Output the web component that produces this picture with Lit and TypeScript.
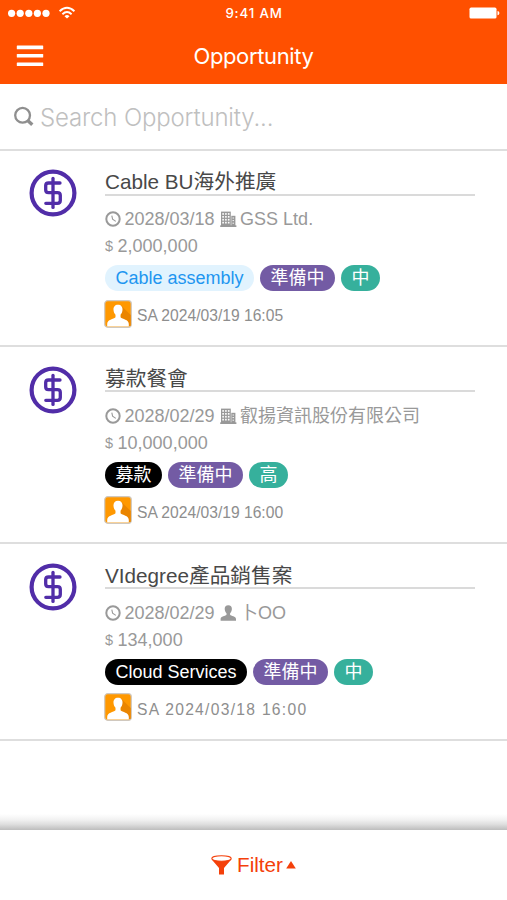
import { LitElement, html, svg, css } from "lit";
import { customElement, property } from "lit/decorators.js";

type Tag = { text: string; tone: string };
type Deal = {
  title: string;
  date: string;
  kind: "company" | "person";
  account: string;
  amount: string;
  tags: Tag[];
  stamp: string;
  wide?: boolean;
};

const deals: Deal[] = [
  {
    title: "Cable BU海外推廣", date: "2028/03/18", kind: "company", account: "GSS Ltd.", amount: "2,000,000",
    tags: [{ text: "Cable assembly", tone: "sky" }, { text: "準備中", tone: "purple" }, { text: "中", tone: "teal" }],
    stamp: "SA 2024/03/19 16:05",
  },
  {
    title: "募款餐會", date: "2028/02/29", kind: "company", account: "叡揚資訊股份有限公司", amount: "10,000,000",
    tags: [{ text: "募款", tone: "black" }, { text: "準備中", tone: "purple" }, { text: "高", tone: "teal" }],
    stamp: "SA 2024/03/19 16:00",
  },
  {
    title: "VIdegree產品銷售案", date: "2028/02/29", kind: "person", account: "卜OO", amount: "134,000",
    tags: [{ text: "Cloud Services", tone: "black" }, { text: "準備中", tone: "purple" }, { text: "中", tone: "teal" }],
    stamp: "SA 2024/03/18 16:00", wide: true,
  },
];

const coin = html`<svg class="coin" width="48" height="48" viewBox="0 0 48 48" fill="none" stroke="#512da8" stroke-linecap="round">
  <circle cx="24" cy="24" r="21.400" stroke-width="4.200"/>
  <path d="M24 9.400V38.400" stroke-width="3.300"/>
  <path d="M31 14H19.500Q16.700 14 16.700 16.600V21Q16.700 23.600 19.500 23.600H28.400Q31.300 23.600 31.300 26.300V31.500Q31.300 34.300 28.400 34.300H16.800" stroke-width="3.300"/>
</svg>`;

const clock = html`<svg width="16" height="16" viewBox="0 0 16 16" fill="none" stroke="#999">
  <circle cx="8" cy="8" r="6.700" stroke-width="2"/>
  <path d="M6.800 4.600L7.600 8.200L10.800 10.400" stroke-width="1.100"/>
</svg>`;

const panes = [0, 1, 2, 3].flatMap((r) =>
  [0, 1, 2].map((c) => svg`<rect x=${2.3 + c * 2.8} y=${2.1 + r * 2.9} width="1.600" height="1.700" fill="#fff"/>`)
);

const building = html`<svg width="17" height="16" viewBox="0 0 17 16">
  <path d="M1 .6H10.800V15.400H1Z" fill="#999"/>
  ${panes}
  <path d="M11.300 4.800H15.400V15.400H11.300Z" fill="#999"/>
  <path d="M12.500 7H14M12.500 9.600H14M12.500 12.200H14" stroke="#fff" stroke-width=".900"/>
  <path d="M.2 14.300H16.400V16H.2Z" fill="#999"/>
</svg>`;

const person = html`<svg width="17" height="16" viewBox="0 0 17 16">
  <path d="M8.300 .2C10.700 .2 12 1.800 11.900 4C11.800 5.900 11 7.300 10.100 8.200V9.800C10.900 11.200 16 11.200 16 14V15.700H.6V14C.6 11.200 5.700 11.200 6.500 9.800V8.200C5.600 7.300 4.800 5.900 4.700 4C4.600 1.800 5.900 .2 8.300 .2Z" fill="#999"/>
</svg>`;

const avatar = html`<svg width="28" height="28" viewBox="0 0 28 28">
  <rect x=".7" y=".7" width="26.600" height="26.600" rx="3" fill="#ff9800" stroke="#d0c8be" stroke-width="1.200"/>
  <path d="M17 5.500L26.700 15V26H17Z" fill="#ea8500"/>
  <path d="M14 4.800C17 4.800 18.700 6.900 18.500 9.800C18.400 12 17.600 13.700 16.500 14.800V17.300C18.400 19.500 24.800 19.200 24.800 24V26.500H3.200V24C3.200 19.200 9.600 19.500 11.500 17.300V14.800C10.400 13.700 9.600 12 9.500 9.800C9.300 6.900 11 4.800 14 4.800Z" fill="#fff"/>
</svg>`;

@customElement("deal-card")
class DealCard extends LitElement {
  @property({ attribute: false }) deal!: Deal;

  static styles = css`
    :host {
      display: grid;
      grid-template-columns: 105px 370px;
      height: 194.700px;
      border-bottom: 2px solid #dedede;
      color: #999;
      font: 18px/24px "Liberation Sans", "Noto Sans CJK TC", sans-serif;
      white-space: nowrap;
    }
    svg { display: block; flex: none; }
    .coin { margin: 18.700px 0 0 29px; }
    .title {
      box-sizing: border-box;
      height: 45px;
      padding-top: 18.700px;
      border-bottom: 2px solid #dadada;
      font-size: 20.700px;
      line-height: 26px;
      color: #484848;
    }
    .row { display: flex; align-items: center; }
    .meta { height: 26px; margin-top: 10.700px; }
    .date { margin: 0 5px 0 3.500px; }
    .account { margin-left: 3.500px; }
    .amount { height: 24px; margin-top: 2px; gap: 4.500px; }
    .sign { font-size: 14.500px; }
    .tags { margin-top: 7px; gap: 6px; }
    .tag { height: 26px; line-height: 26px; padding: 0 10.500px; border-radius: 13px; color: #fff; }
    .sky { background: #e1f3fe; color: #1e96f0; }
    .purple { background: #735ba4; }
    .teal { background: #36b09c; }
    .black { background: #000; }
    .author { margin: 8px 0 0 -1px; gap: 5px; font-size: 15.650px; color: #8e8e8e; }
    .stamp { padding-top: 5px; }
    .wide { letter-spacing: 1.280px; }
  `;

  render() {
    const d = this.deal;
    return html`
      <div>${coin}</div>
      <div>
        <div class="title">${d.title}</div>
        <div class="row meta">
          ${clock}<span class="date">${d.date}</span>
          ${d.kind === "company" ? building : person}<span class="account">${d.account}</span>
        </div>
        <div class="row amount"><span class="sign">$</span><span>${d.amount}</span></div>
        <div class="row tags">${d.tags.map((t) => html`<span class="tag ${t.tone}">${t.text}</span>`)}</div>
        <div class="row author">${avatar}<span class="stamp ${d.wide ? "wide" : ""}">${d.stamp}</span></div>
      </div>
    `;
  }
}

@customElement("app-root")
class AppRoot extends LitElement {
  static styles = css`
    :host {
      display: flex;
      flex-direction: column;
      height: 900px;
      overflow: hidden;
      background: #fff;
      font-family: Inter, sans-serif;
      white-space: nowrap;
    }
    svg { display: block; }
    header { height: 84.300px; flex: none; background: #ff5000; color: #fff; }
    .status, .nav { display: grid; grid-template-columns: 1fr auto 1fr; align-items: center; }
    .status { height: 26px; padding: 0 7px 0 8px; font-size: 13.300px; font-weight: 500; letter-spacing: .830px; }
    .battery { justify-self: end; }
    .nav { height: 59px; padding: 0 16px; font-size: 22px; }
    .nav-title { letter-spacing: -.370px; }
    .search {
      height: 64.300px;
      flex: none;
      border-bottom: 2px solid #dedede;
      display: flex;
      align-items: center;
      gap: 6px;
      padding-left: 13px;
      font-size: 24px;
      font-weight: 300;
      letter-spacing: -.160px;
      color: #c0c0c0;
    }
    .hint { padding-top: 2px; }
    main { flex: 1; }
    .shade { height: 16px; flex: none; background: linear-gradient(#fff, #f2f2f2 35%, #dedede 65%, #bdbdbd); }
    footer {
      height: 70.500px;
      flex: none;
      display: flex;
      align-items: center;
      justify-content: center;
      font: 20.700px/24px "Liberation Sans", sans-serif;
      color: #f4400a;
    }
    .label { margin: 0 3px 0 5px; padding-top: 1px; }
  `;

  render() {
    return html`
      <header>
        <div class="status">
          <svg width="70" height="16" viewBox="0 0 70 16" fill="#fff">
            ${[0, 1, 2, 3, 4].map((i) => svg`<circle cx=${3.6 + i * 8.6} cy="8.300" r="3.600"/>`)}
            <g fill="none" stroke="#fff" stroke-width="1.900">
              <path d="M51.600 6.200Q59 -.7 66.400 6.200"/>
              <path d="M54.400 9.200Q59 4.900 63.600 9.200"/>
            </g>
            <path d="M56.500 11.200Q59 9 61.500 11.200L59 13.600Z"/>
          </svg>
          <span>9:41 AM</span>
          <svg class="battery" width="31" height="12" viewBox="0 0 31 12" fill="#fff">
            <rect x=".5" y=".6" width="27" height="11" rx="1.600"/>
            <path d="M28.500 4C31 4.400 31 7.800 28.500 8.200Z"/>
          </svg>
        </div>
        <div class="nav">
          <svg width="28" height="22" viewBox="0 0 28 22" fill="#fff">
            <rect x=".8" y=".6" width="26.400" height="3.600" rx=".5"/>
            <rect x=".8" y="9" width="26.400" height="3.600" rx=".5"/>
            <rect x=".8" y="17.400" width="26.400" height="3.600" rx=".5"/>
          </svg>
          <span class="nav-title">Opportunity</span>
          <span></span>
        </div>
      </header>
      <div class="search">
        <svg width="21" height="21" viewBox="0 0 21 21" fill="none" stroke="#8f8f8f">
          <circle cx="9.600" cy="9.300" r="7.400" stroke-width="2.300"/>
          <path d="M14.700 14.400L19.300 18.700" stroke-width="3.400"/>
        </svg>
        <span class="hint">Search Opportunity...</span>
      </div>
      <main>${deals.map((d) => html`<deal-card .deal=${d}></deal-card>`)}</main>
      <div class="shade"></div>
      <footer>
        <svg width="21" height="20" viewBox="0 0 21 20">
          <path d="M.5 4.200L8 13V19.500H13V13L20.500 4.200Z" fill="#f4400a"/>
          <ellipse cx="10.500" cy="3.500" rx="9.700" ry="2.700" fill="#fff" stroke="#f4400a" stroke-width="1.100"/>
        </svg>
        <span class="label">Filter</span>
        <svg width="10" height="9" viewBox="0 0 10 9"><path d="M5 1L9.800 8.600H.2Z" fill="#f4400a"/></svg>
      </footer>
    `;
  }
}
